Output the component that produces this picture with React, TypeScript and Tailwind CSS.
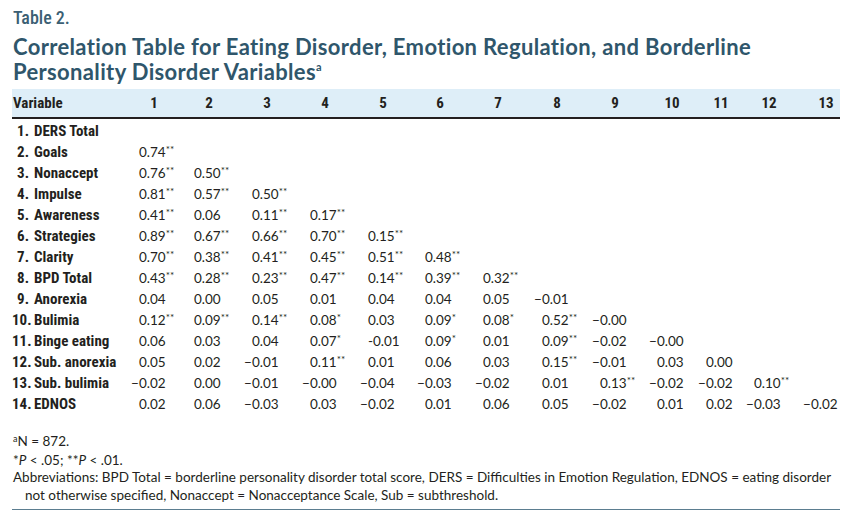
const cols = [
  { n: '1', w: 'w-[55px]' },
  { n: '2', w: 'w-[58px]' },
  { n: '3', w: 'w-[58px]' },
  { n: '4', w: 'w-[58px]' },
  { n: '5', w: 'w-[57px]' },
  { n: '6', w: 'w-[58px]' },
  { n: '7', w: 'w-[59px]' },
  { n: '8', w: 'w-[58px]' },
  { n: '9', w: 'w-[57px]' },
  { n: '10', w: 'w-[49px]' },
  { n: '11', w: 'w-[48px]' },
  { n: '12', w: 'w-[57px]' },
  { n: '13', w: 'w-[38px]' },
];

const rows: [string, string[]][] = [
  ['DERS Total', []],
  ['Goals', ['0.74**']],
  ['Nonaccept', ['0.76**', '0.50**']],
  ['Impulse', ['0.81**', '0.57**', '0.50**']],
  ['Awareness', ['0.41**', '0.06', '0.11**', '0.17**']],
  ['Strategies', ['0.89**', '0.67**', '0.66**', '0.70**', '0.15**']],
  ['Clarity', ['0.70**', '0.38**', '0.41**', '0.45**', '0.51**', '0.48**']],
  ['BPD Total', ['0.43**', '0.28**', '0.23**', '0.47**', '0.14**', '0.39**', '0.32**']],
  ['Anorexia', ['0.04', '0.00', '0.05', '0.01', '0.04', '0.04', '0.05', '−0.01']],
  ['Bulimia', ['0.12**', '0.09**', '0.14**', '0.08*', '0.03', '0.09*', '0.08*', '0.52**', '−0.00']],
  ['Binge eating', ['0.06', '0.03', '0.04', '0.07*', '-0.01', '0.09*', '0.01', '0.09**', '−0.02', '−0.00']],
  ['Sub. anorexia', ['0.05', '0.02', '−0.01', '0.11**', '0.01', '0.06', '0.03', '0.15**', '−0.01', '0.03', '0.00']],
  ['Sub. bulimia', ['−0.02', '0.00', '−0.01', '−0.00', '−0.04', '−0.03', '−0.02', '0.01', '0.13**', '−0.02', '−0.02', '0.10**']],
  ['EDNOS', ['0.02', '0.06', '−0.03', '0.03', '−0.02', '0.01', '0.06', '0.05', '−0.02', '0.01', '0.02', '−0.03', '−0.02']],
];

const condensed = "font-['Roboto',sans-serif] font-stretch-condensed";
const notes = "font-['Lato',sans-serif]";

function Value({ v }: { v: string }) {
  const neg = v.startsWith('−');
  const body = neg ? v.slice(1) : v;
  const stars = body.match(/\*+$/)?.[0] ?? '';
  const num = body.replace(/\*+$/, '');
  return (
    <span className="whitespace-nowrap">
      {neg ? <span className="inline-block w-[8px] -ml-[8px]">−</span> : null}
      {num}
      {stars ? <span className="relative -top-[4px] text-[10px]">{stars}</span> : null}
    </span>
  );
}

export default function App() {
  return (
    <div className="w-[852px] h-[519px] bg-white px-[12px] pt-[8px] text-[#231f20]">
      <p className={`${condensed} font-medium text-[18px] leading-[20px] text-[#3b5f74] pl-[1px]`}>Table 2.</p>
      <h1 className="mt-[6px] pl-[1px] font-['Lato',sans-serif] font-bold text-[22px] leading-[25px] tracking-[0.35px] text-[#2f566b]">
        Correlation Table for Eating Disorder, Emotion Regulation, and Borderline
        <br />
        Personality Disorder Variables
        <span className="relative -top-[9px] text-[11px]">a</span>
      </h1>

      <div className={`${condensed} mt-[1px] flex h-[30px] items-center bg-[#deeef8] border-b-2 border-[#231f20] font-bold text-[15px]`}>
        <div className="w-[118px] pl-[1px]">Variable</div>
        {cols.map((c) => (
          <div key={c.n} className={`${c.w} pl-[9px]`}>
            <div className="w-[30px] text-center">{c.n}</div>
          </div>
        ))}
      </div>

      <div className="pt-[2px]">
        {rows.map(([label, vals], i) => (
          <div key={label} className="flex h-[21px] items-center">
            <div className={`${condensed} w-[118px] font-bold text-[15px] whitespace-nowrap`}>
              <span className="inline-block w-[17px] text-right">{i + 1}.</span>
              <span className="ml-[5px]">{label}</span>
            </div>
            {cols.map((c, j) => (
              <div key={c.n} className={`${c.w} pl-[9px] font-['Lato',sans-serif] text-[13.5px]`}>
                {vals[j] ? <Value v={vals[j]} /> : null}
              </div>
            ))}
          </div>
        ))}
      </div>

      <div className={`${notes} mt-[18px] pl-[1px] text-[13.5px] leading-[17.5px]`}>
        <p>
          <span className="relative -top-[4px] text-[9px]">a</span>N = 872.
        </p>
        <p>
          *<i>P</i> &lt; .05; **<i>P</i> &lt; .01.
        </p>
        <p className="pl-[12px] -indent-[12px]">
          Abbreviations: BPD Total = borderline personality disorder total score, DERS = Difficulties in Emotion
          Regulation, EDNOS = eating disorder
          <br />
          not otherwise specified, Nonaccept = Nonacceptance Scale, Sub = subthreshold.
        </p>
      </div>
      <div className="mt-[5px] border-b border-[#5b7d90]" />
    </div>
  );
}
